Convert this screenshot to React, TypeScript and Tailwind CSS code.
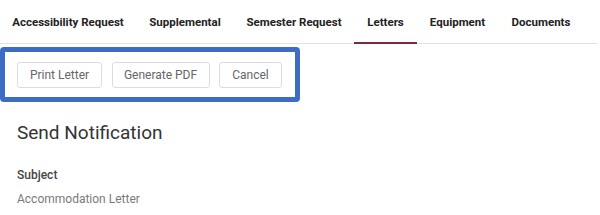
import React from "react";

const tabs: [string, string][] = [
  ["Accessibility Request", "w-[136px]"],
  ["Supplemental", "w-[98px]"],
  ["Semester Request", "w-[120px]"],
  ["Letters", "w-[63px]"],
  ["Equipment", "w-[81px]"],
  ["Documents", "w-[86px]"],
];

export default function App() {
  return (
    <div className="w-[600px] h-[215px] bg-white overflow-hidden" style={{ fontFamily: "Roboto, 'Noto Sans', sans-serif" }}>
      <div className="flex h-[44px] border-b border-[#e2e2e2] mr-[3px]">
        {tabs.map(([t, w]) => (
          <div key={t} className={`relative flex items-center justify-center pt-[3px] ${w} whitespace-nowrap text-[11.5px] font-bold text-[#222]`}>
            {t}
            {t === "Letters" && <div className="absolute left-0 right-0 bottom-[-1px] h-[2px] bg-[#7d2a45]" />}
          </div>
        ))}
      </div>
      <div className="mt-[3px] w-[300px] h-[55px] border-[5px] border-[#3c6cc4] rounded-[4px] flex items-center gap-[9.5px] pl-[12px]">
        <button className="h-[26px] w-[85px] border border-[#dcdcdc] rounded-[3px] text-[12px] text-[#666] whitespace-nowrap">Print Letter</button>
        <button className="h-[26px] w-[98px] border border-[#dcdcdc] rounded-[3px] text-[12px] text-[#666] whitespace-nowrap">Generate PDF</button>
        <button className="h-[26px] w-[63px] border border-[#dcdcdc] rounded-[3px] text-[12px] text-[#666] whitespace-nowrap">Cancel</button>
      </div>
      <div className="pl-[17px]">
        <div className="mt-[19px] text-[19px] leading-[24px] text-[#333]">Send Notification</div>
        <div className="mt-[22px] text-[12px] leading-[16px] font-medium text-[#444]">Subject</div>
        <div className="mt-[8px] text-[12px] leading-[16px] text-[#7a7a7a]">Accommodation Letter</div>
      </div>
    </div>
  );
}
